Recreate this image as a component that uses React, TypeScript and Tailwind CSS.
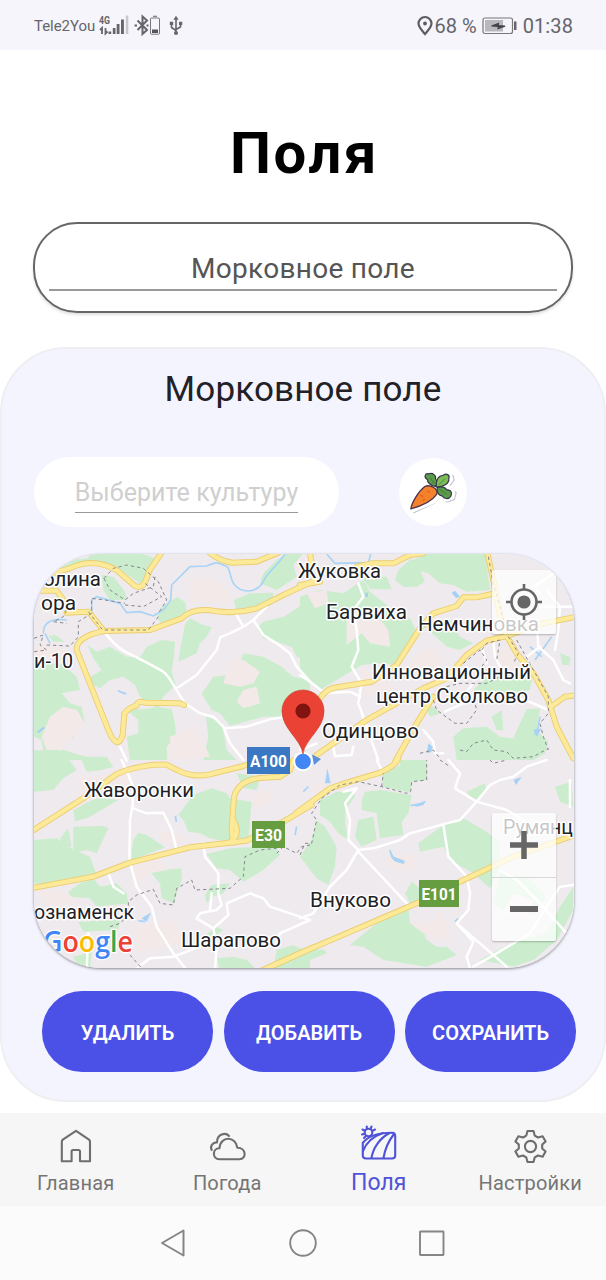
import React from "react";

/* Each quadrant of the map is described in its own local grid, three units per pixel. */
type Quadrant = {
  origin: string;
  greens: string[];
  patches: string[];
  water: string[];
  ponds: string[];
  minor: string[];
  major: string[];
  borders: string[];
};

const quadrants: Quadrant[] = [
  {
    origin: "translate(30 550) scale(0.33333)",
    greens: [
      "50,75 80,45 130,28 170,26 185,10 300,10 340,12 375,25 350,85 330,100 262,55 225,52 190,45 110,60",
      "215,75 250,80 285,125 290,150 240,150 220,120",
      "690,100 700,70 740,30 770,10 820,10 790,45 800,80 740,120",
      "380,205 395,170 440,142 465,155 470,180 455,200 400,226",
      "612,150 660,130 730,128 725,165 700,175 620,185",
      "700,215 760,200 840,150 840,330 800,320 785,290 740,275 700,265 680,235",
      "465,222 480,205 520,225 545,232 530,260 510,280 500,310 445,335 452,290",
      "172,285 200,305 240,290 290,320 330,322 350,290 395,270 435,275 432,320 425,365 437,405 400,440 385,475 350,455 330,440 315,405 280,380 240,390 210,415 180,400 175,385 215,360 190,325",
      "12,330 100,345 140,380 150,420 95,430 120,460 155,470 165,520 135,530 130,565 95,575 90,600 70,620 40,610 35,570 12,560",
      "55,258 75,255 105,275 70,275",
      "290,480 340,478 385,470 425,478 435,520 438,560 410,590 412,630 300,630 290,560 325,550 325,510",
      "515,432 550,380 600,375 625,350 640,310 700,320 755,350 790,380 840,390 840,420 770,450 750,500 700,500 600,528 570,490 545,480",
      "528,500 575,515 590,600 620,630 520,630 535,560",
      "12,600 80,605 100,600 200,630 12,630",
    ],
    patches: [
      "60,500 100,470 140,480 165,520 130,560 90,600 50,600 35,560",
      "580,400 600,330 640,330 690,365 670,400 630,410",
      "640,420 680,410 690,460 640,475 620,455",
      "480,90 520,80 600,120 600,160 480,155",
      "12,290 90,290 130,330 12,320",
      "420,560 500,530 540,620 420,630",
    ],
    water: [
      "M765,12 C740,50 720,60 705,85 C690,120 660,130 630,118 C600,105 605,70 592,50 C560,35 560,35 530,48 L480,50 L425,105 L422,150 L400,180 L370,198 L330,185 L290,188 L270,160 L200,140 L185,150 L185,190",
      "M40,250 C40,215 65,205 110,210 M45,250 L60,280",
    ],
    ponds: ["20,545 40,530 45,535 25,550", "265,420 290,430 285,434 262,424"],
    minor: [
      "M222,243 C240,270 260,290 285,305 L345,335 L400,365 C420,380 425,400 465,460 L510,490 L550,500 L580,530 L600,580 L640,630",
      "M440,415 L500,375 L560,300 L570,262 L600,250 L640,230 L670,210 L710,170 M640,230 L620,195 M670,210 L700,255 L740,280 L780,310 L800,350 L840,395",
      "M585,535 L650,530 L720,508 L760,502",
      "M270,590 L290,632",
    ],
    major: [
      "M50,75 L120,55 Q190,20 262,62 L315,108 Q338,118 348,90 L358,62 L400,0",
      "M535,5 Q570,35 610,38 L680,35 L745,8",
      "M850,93 L760,135 L680,175 Q620,192 560,184 Q490,170 455,205 L360,240 L222,243 Q138,260 140,300 L235,540 Q262,605 278,555 L283,490 Q300,470 320,467 Q322,450 345,458 L450,460 L462,465",
      "M30,122 L80,122 L100,150",
      "M110,188 L175,185 L222,243",
    ],
    borders: [
      "M222,85 L250,55 L290,45 L340,55 L385,95 L410,150 L385,190 M222,85 L240,120 L285,150 L310,130 L370,110 L375,80 M285,165 L340,170 L395,140 L345,100",
      "M50,285 L120,288 L145,260 L145,215 L185,190 L185,145 L225,150 L285,160",
      "M175,185 L218,240 L355,240 L385,200 M110,180 L100,200 L70,215 L110,220",
      "M12,265 L40,255 L30,285 L50,300 L12,305",
    ],
  },
  {
    origin: "translate(300 550) scale(0.33333)",
    greens: [
      "330,35 375,12 555,10 570,120 500,125 460,105 420,100 385,70 345,60",
      "285,90 295,60 335,25 360,60 375,95 350,110 310,110",
      "185,80 260,80 275,118 210,118",
      "0,140 60,120 130,130 190,90 210,125 260,165 270,200 330,205 350,245 325,300 285,345 250,340 185,345 110,390 60,420 0,370",
      "370,225 450,210 480,260 520,280 480,300 440,290",
      "520,420 560,380 610,375 700,370 690,420 610,430 540,450",
      "460,560 490,535 560,530 600,560 640,565 680,478 720,475 710,540 745,575 735,610 700,630 470,630",
      "780,310 812,322 808,345 788,345",
      "370,460 400,470 420,490 390,500",
      "575,500 605,480 610,540 590,540",
    ],
    patches: [
      "140,200 200,170 230,195 265,240 270,290 210,280 185,250 140,285",
      "190,345 220,385 260,390 290,420 200,440 180,390",
      "350,310 400,290 430,340 380,370 320,360",
      "20,130 80,120 85,160 45,175",
      "590,300 640,290 690,350 600,370",
    ],
    water: [
      "M80,12 L105,40 L205,38 L212,12",
      "M720,500 L715,530 L705,555 M755,260 L705,330 M690,290 L725,320",
    ],
    ponds: [
      "195,128 204,128 204,142 195,140",
      "455,128 465,122 480,140 468,144",
      "385,580 398,590 395,605 380,610",
      "700,540 725,535 710,560",
    ],
    minor: [
      "M175,100 L190,140 L160,180 L170,240 L175,300 L155,350 L185,400 L175,460 L190,500",
      "M0,375 L30,395 L75,430 L150,425 L180,440",
      "M580,275 L585,320 L600,350 M545,290 L560,340",
      "M435,485 L490,460 L540,430 M520,400 L480,450",
      "M620,430 L700,460 L745,480",
      "M710,220 L715,290 L760,330 L790,390 L810,400 M720,290 L680,320 M740,120 L780,170 L775,240 L765,300 M720,170 L820,170",
      "M185,490 L235,630 M100,590 L105,618 L155,615 L160,590 M370,540 L400,575 L405,610 L430,610 M0,600 L50,580",
      "M720,130 L700,110 L760,70",
    ],
    major: [
      "M170,50 L215,40 L280,40 L330,15 L370,10",
      "M30,10 L35,40",
      "M0,105 L60,95",
      "M50,460 Q75,415 110,412 L215,395 L290,345 L360,235 L400,190 L470,168 L490,142 L530,142 L575,132",
      "M50,615 L200,510 L370,415 L440,385 L500,315 L560,272 L620,258 L720,222 L840,198",
      "M562,10 L580,90 L600,200 L620,258 L650,310 L700,370 L745,450 L770,530 L820,625",
      "M285,635 L350,520 L400,440",
      "M760,465 L795,440 L825,436",
    ],
    borders: [
      "M565,20 L580,100 L625,260 L655,310 L640,340 M650,270 L700,360 L745,440 L745,490 L720,520 L730,560 L745,600",
      "M545,300 L560,280 L600,270 L590,330 M490,340 L540,300 L560,330 L545,350",
      "M400,450 L410,480 L465,520 L500,520 L530,480 L520,440 M440,410 L480,400 L560,400 L600,380",
      "M360,610 L400,600 L420,625 M480,600 L500,605 L520,580 L560,570 L580,600 L620,605 L640,625 L700,620 L745,595",
    ],
  },
  {
    origin: "translate(30 760) scale(0.33333)",
    greens: [
      "12,-10 50,-10 110,-10 140,30 100,55 70,90 12,95",
      "150,-10 230,-10 250,20 215,30 170,35",
      "130,150 175,125 270,90 265,120 180,170 135,185",
      "130,200 220,198 235,205 200,280 170,270 130,280",
      "90,235 115,205 125,260 100,260",
      "12,240 80,235 130,270 180,290 200,345 135,365 100,360 60,375 12,370",
      "115,395 150,370 190,355 210,380 260,370 290,400 295,430 200,440 180,415 120,410",
      "305,270 310,240 325,218 350,225 405,262 360,280 305,300",
      "445,165 490,105 545,85 590,100 600,115 665,125 655,240 610,250 540,235 510,220 475,215 460,180",
      "360,335 400,330 455,325 455,360 430,430 395,415 390,370",
      "530,282 600,265 660,262 740,265 750,285 700,330 640,365 600,330 560,325",
      "525,405 545,375 600,370 580,400 550,410 530,430",
      "145,485 270,480 265,510 160,515",
      "560,595 610,590 650,600 680,630 570,630",
      "740,570 790,555 840,580 840,630 730,630",
      "130,590 185,575 180,630 150,630",
      "520,530 560,500 580,510 540,540",
      "620,40 690,50 680,90 640,85",
    ],
    patches: [
      "150,50 300,40 300,90 260,120 200,110 130,150",
      "300,310 380,290 410,330 360,340 320,380",
      "12,390 100,390 150,430 60,440",
      "300,500 440,480 450,550 330,580",
      "660,110 710,90 740,120 680,150",
      "390,210 470,230 440,260 390,240",
    ],
    water: ["M345,475 L360,462 M325,482 L345,485", "M435,170 L440,185 M795,225 L800,200"],
    ponds: ["335,475 362,458 350,485", "434,170 440,165 438,185"],
    minor: [
      "M275,0 L310,80 L308,135 L300,180 L298,300 L320,380 L365,440 L380,500 L430,580 L470,630",
      "M310,145 L350,160 L400,158 L425,210 L440,270",
      "M520,250 L525,290 L565,340 L565,400 L575,435 L560,450 L510,460 L500,475 L550,505 L595,465 L590,430 L660,400 L700,415 L720,440 L840,480 L750,520 L735,560",
      "M550,505 L560,560 L555,630 M320,625 L360,595 L430,590 L510,560",
      "M175,520 L170,630 M235,340 L250,380 L280,400 M545,400 L540,450",
    ],
    major: [
      "M8,212 L160,115 L260,42 Q330,12 410,14 C450,35 480,55 540,43 L640,18 L760,-20",
      "M8,384 L190,350 L300,308 L480,262 L650,242 L760,185 L845,135",
      "M610,248 L605,210 L612,110 Q625,62 690,54 L750,50 L780,30 L790,0 M598,248 Q635,225 610,180",
      "M700,630 L850,562",
    ],
    borders: [
      "M240,500 L270,490 L295,465 L295,425 L320,405 L370,388 L390,430 L430,435 L440,385 L485,360 L495,390 L600,385 L640,350 L645,290 L690,270 L740,265 M740,280 L760,260 L800,280 L815,260 L840,255",
      "M300,585 L340,630",
    ],
  },
  {
    origin: "translate(300 760) scale(0.33333)",
    greens: [
      "245,40 300,15 300,0 380,0 382,60 335,65 330,98 250,80",
      "60,120 110,95 160,95 165,110 135,150 135,190 145,240 115,220 90,185 60,165",
      "185,120 195,95 240,90 335,105 325,160 305,185 310,225 240,235 230,160 185,150",
      "175,180 220,170 230,240 185,260 165,230",
      "0,290 35,240 50,180 75,200 110,260 105,320 85,375 50,355 0,290",
      "355,250 430,195 490,175 560,215 600,250 600,320 570,385 520,340 450,300 430,260 360,275",
      "500,95 555,70 558,92 520,125",
      "765,80 815,65 820,140 780,125",
      "150,555 230,490 300,450 325,440 330,490 365,500 380,540 410,560 440,560 470,585 380,620 250,600 190,560",
      "315,400 335,365 360,385 355,430 330,430",
      "540,600 640,545 740,520 780,440 820,380 820,450 770,540 700,600 640,620",
      "0,565 75,570 80,580 30,600 0,610",
      "600,340 680,350 740,410 700,460 640,470 580,430",
    ],
    patches: [
      "310,280 345,290 350,320 300,330 250,300",
      "330,490 400,480 420,450 460,540 420,540 370,520",
      "40,80 60,70 110,90 50,120",
      "640,400 700,420 680,470 600,470",
    ],
    water: ["M270,270 C275,300 285,305 312,308 M332,138 C350,125 350,145 375,125", "M465,485 L475,475 M10,95 L25,80"],
    ponds: [
      "75,70 82,25 92,70",
      "268,268 282,290 314,302 312,312 284,304",
      "335,135 360,128 378,122 370,135 350,140",
      "640,60 665,50 648,75",
    ],
    minor: [
      "M230,0 L245,30 M130,95 L170,85 L135,130 L150,180 L145,240 L175,270 M0,475 L40,460 L90,380 L140,330 L175,270 L220,265 L300,240 L330,220 L440,190 L480,180 L530,125 L570,75 L600,60 L640,50 L680,20 L740,0",
      "M175,275 L320,430",
      "M430,195 L445,290 L500,350 L510,400 L505,450 L470,490 L520,545 L500,590 L510,625 M470,490 L540,550 L620,620 M445,0 L480,40 L465,85 L530,125 L620,150 L670,180",
      "M520,620 L590,580 L690,520 L740,440 L780,380 L820,375 M600,330 L650,360 L720,430 L800,520",
      "M810,60 L810,140",
    ],
    major: [
      "M-10,157 L90,85 L150,65 L240,38 Q290,15 295,-5",
      "M-110,630 L0,580 L140,520 L350,430 L480,365 L640,290 L825,225",
    ],
    borders: [
      "M0,285 L15,250 L35,250 L50,180 L35,160 L65,115 L120,75 L175,65 L245,80 L320,100 L332,95 L335,65 L380,60 L380,0 M245,80 L250,40",
      "M420,0 L450,20 M570,0 L580,10 L620,0",
    ],
  },
];

function MapLabel({ x, y, w, children, size = 20 }: { x: number; y: number; w: number; children: string; size?: number }) {
  return (
    <text
      x={x}
      y={y}
      textLength={w}
      lengthAdjust="spacingAndGlyphs"
      fontSize={size}
      fill="#202124"
      stroke="#ffffff"
      strokeWidth="3"
      strokeLinejoin="round"
      paintOrder="stroke"
    >
      {children}
    </text>
  );
}

function Shield({ x, y, w, h, tw, color, children }: { x: number; y: number; w: number; h: number; tw: number; color: string; children: string }) {
  return (
    <g>
      <rect x={x} y={y} width={w} height={h} fill={color} />
      <text x={x + (w - tw) / 2} y={y + h / 2 + 6} textLength={tw} lengthAdjust="spacingAndGlyphs" fontSize="16.5" fontWeight="700" fill="#fff">
        {children}
      </text>
    </g>
  );
}

function FieldMap() {
  const layer = (draw: (q: Quadrant) => React.ReactNode) =>
    quadrants.map((q, i) => (
      <g key={i} transform={q.origin}>
        {draw(q)}
      </g>
    ));
  return (
    <svg viewBox="34 554 540 414" className="block h-[414px] w-[540px] font-['Roboto',sans-serif]">
      <rect x="34" y="554" width="540" height="414" fill="#efeaee" />
      {layer((q) => q.greens.map((p, i) => <polygon key={i} points={p} fill="#cbedcd" />))}
      {layer((q) => q.patches.map((p, i) => <polygon key={i} points={p} fill="#f3e9e9" />))}
      {layer((q) => (
        <>
          {q.ponds.map((p, i) => <polygon key={i} points={p} fill="#a5d1f5" />)}
          {q.water.map((d, i) => <path key={i} d={d} fill="none" stroke="#a9d4f5" strokeWidth="5" strokeLinejoin="round" />)}
          {q.minor.map((d, i) => <path key={i} d={d} fill="none" stroke="#fff" strokeWidth="7.5" strokeLinejoin="round" strokeLinecap="round" />)}
        </>
      ))}
      {layer((q) => q.major.map((d, i) => <path key={i} d={d} fill="none" stroke="#ebcd72" strokeWidth="18" strokeLinejoin="round" strokeLinecap="round" />))}
      {layer((q) => q.major.map((d, i) => <path key={i} d={d} fill="none" stroke="#fdea98" strokeWidth="12.5" strokeLinejoin="round" strokeLinecap="round" />))}
      {layer((q) => q.borders.map((d, i) => <path key={i} d={d} fill="none" stroke="#86868e" strokeWidth="3" strokeDasharray="10 9" />))}

      <MapLabel x={43} y={586} w={58}>олина</MapLabel>
      <MapLabel x={41} y={610} w={35}>ора</MapLabel>
      <MapLabel x={34} y={668} w={39}>и-10</MapLabel>
      <MapLabel x={298} y={578} w={83}>Жуковка</MapLabel>
      <MapLabel x={326} y={619} w={81}>Барвиха</MapLabel>
      <MapLabel x={418} y={631} w={121}>Немчиновка</MapLabel>
      <MapLabel x={372} y={679} w={159}>Инновационный</MapLabel>
      <MapLabel x={376} y={703} w={152}>центр Сколково</MapLabel>
      <MapLabel x={322} y={738} w={97}>Одинцово</MapLabel>
      <MapLabel x={84} y={797} w={110}>Жаворонки</MapLabel>
      <MapLabel x={310} y={907} w={81}>Внуково</MapLabel>
      <MapLabel x={181} y={947} w={100}>Шарапово</MapLabel>
      <MapLabel x={34} y={919} w={100}>ознаменск</MapLabel>
      <MapLabel x={503} y={834} w={70}>Румянц</MapLabel>

      <Shield x={247} y={747} w={43} h={27} tw={37} color="#3b78c3">A100</Shield>
      <Shield x={252} y={821} w={33} h={27} tw={27} color="#669d41">E30</Shield>
      <Shield x={419} y={880} w={40} h={27} tw={35} color="#669d41">E101</Shield>

      {/* current position and its heading */}
      <path d="M312 754.500 L321 759 L314 765 Z" fill="#5c8fdc" />
      <circle cx="303" cy="761.5" r="9.8" fill="#fff" />
      <circle cx="303" cy="761.5" r="7.8" fill="#4285f4" />
      <path d="M303 754 C301 739 282 729 282 711 A21 21 0 0 1 324 711 C324 729 305 739 303 754 Z" fill="#ea4335" stroke="#c5352c" strokeWidth="0.6" />
      <circle cx="303" cy="711" r="7.6" fill="#811411" />

      <text x="43" y="951.500" fontSize="28" fontFamily="'Open Sans', Roboto, sans-serif" fontWeight="600" textLength="90" lengthAdjust="spacingAndGlyphs" stroke="#fff" strokeWidth="2.5" paintOrder="stroke">
        <tspan fill="#4285f4">G</tspan>
        <tspan fill="#ea4335">o</tspan>
        <tspan fill="#fbbc05">o</tspan>
        <tspan fill="#4285f4">g</tspan>
        <tspan fill="#34a853">l</tspan>
        <tspan fill="#ea4335">e</tspan>
      </text>
    </svg>
  );
}

function StatusBar() {
  return (
    <header className="flex h-[50px] shrink-0 items-center bg-[#f5f5fb] pl-[34px] pr-[33px] pt-[2px] text-[#66666a]">
      <span className="text-[15px] tracking-[-0.05px]">Tele2You</span>
      <svg viewBox="98 14 90 24" className="ml-[3px] h-6 w-[90px]">
        <text x="99" y="23.500" fontSize="10.5" fontWeight="700" fill="#66666a" textLength="11" lengthAdjust="spacingAndGlyphs">4G</text>
        <path d="M102 34v-6l-2 2M105.500 28v5.500l2-2" fill="none" stroke="#66666a" strokeWidth="1.800" />
        <path d="M108.500 31.500h2.700v2.500h-2.700zM112.800 28h2.700v6h-2.700zM116.700 24h2.800V34h-2.800zM121 19.500h2.900V34H121z" fill="#66666a" />
        <path d="M125.800 15.500h2.500v18.500h-2.500z" fill="#c7c7cc" />
        <path d="M137.500 20.500l9.500 9.500-4.500 4V16.500l4.500 4-9.500 9.500" fill="none" stroke="#66666a" strokeWidth="2" />
        <path d="M134.500 25.500h2.500M146.500 25.500h2" stroke="#66666a" strokeWidth="2" />
        <rect x="150.500" y="18" width="9" height="16.200" rx="0.800" fill="none" stroke="#77777b" strokeWidth="1" />
        <path d="M153 16.300h4" stroke="#77777b" strokeWidth="1.200" />
        <path d="M152 29.500h6v3.500h-6z" fill="#55555a" />
        <path d="M176 18v16M171.500 24v3.500l4.500 3M180.500 23.500v3.500l-4.500 2.500" fill="none" stroke="#66666a" strokeWidth="1.600" />
        <path d="M176 15.800l2.600 4h-5.200zM169.800 21.800h3.400v3.300h-3.400zM179 21.800h3.300v3.300H179z" fill="#66666a" />
        <circle cx="176" cy="33" r="2" fill="#66666a" />
      </svg>
      <div className="flex-1" />
      <svg viewBox="0 0 18 22" className="mr-[1px] h-[22px] w-[18px]">
        <path d="M9 19C6 15.500 2.500 12 2.500 8.500a6.500 6.500 0 0 1 13 0C15.500 12 12 15.500 9 19z" fill="none" stroke="#5d5d61" strokeWidth="2.200" />
        <circle cx="9" cy="8.500" r="1.900" fill="#5d5d61" />
      </svg>
      <span className="text-[20px]">68 %</span>
      <svg viewBox="0 0 36 18" className="mx-[5px] h-[18px] w-9">
        <rect x="1" y="1" width="29.500" height="15.500" rx="2" fill="none" stroke="#77777b" strokeWidth="1.200" />
        <rect x="3" y="3" width="18" height="11.500" fill="#b9b9bd" />
        <path d="M9.500 9l7-2.500-.2 2 6.700.600-7 2.600.3-2.200z" fill="#44444a" stroke="#44444a" strokeWidth="1.200" />
        <path d="M32 4.500h2.500v8.500H32z" fill="#66666a" />
      </svg>
      <span className="text-[20px] tracking-[0.1px]">01:38</span>
    </header>
  );
}

function Carrot() {
  return (
    <svg viewBox="-1.5 2.5 90 80" className="h-20 w-[90px]">
      <g transform="scale(0.33333)" strokeLinejoin="round">
        <path d="M72 190 L136 160 L150 142 L172 157 L194 150 L200 130 L178 112 L194 92 L190 76" fill="none" stroke="#c6c7cd" strokeWidth="4" />
        <path d="M68 182 L134 155 L148 137 L170 150 L188 143 L190 124 L170 108 L184 90 L180 76 L150 76 L112 72" fill="none" stroke="#fff" strokeWidth="13" />
        <path d="M64 178 C66 162 84 128 106 111 C120 104 147 116 142 134 C128 155 94 170 64 178Z" fill="#f5822a" stroke="#51354f" strokeWidth="4" />
        <path d="M92 136l9 6M106 148l-6 6M112 124l9 5" stroke="#dd6520" strokeWidth="4" />
        <path d="M138 111 C124 109 112 98 114 90 C102 84 106 70 118 73 C130 68 141 79 138 88 C146 97 143 106 138 111Z" fill="#5a9a48" stroke="#34354f" strokeWidth="3.5" />
        <path d="M140 112 C138 92 148 77 161 78 C170 70 182 76 178 87 C180 102 160 114 140 112Z" fill="#7dbb57" stroke="#34354f" strokeWidth="3.500" />
        <path d="M143 114 C156 109 168 114 172 121 C187 120 188 134 184 140 C178 151 162 148 159 140 C146 138 142 126 143 114Z" fill="#5a9a48" stroke="#34354f" strokeWidth="3.500" />
        <path d="M148 106l18-18M122 84l13 20M148 118l24 16" stroke="#3a6d3e" strokeWidth="2" />
      </g>
    </svg>
  );
}

const iconStroke = { fill: "none", strokeWidth: 2.1, strokeLinejoin: "round" as const, strokeLinecap: "round" as const };

const tabs = [
  {
    label: "Главная",
    active: false,
    icon: (
      <svg viewBox="57 1126 38 38" className="h-[38px] w-[38px]">
        <path d="M76 1130.800 L62.800 1139.600 Q61.800 1140.400 61.800 1142 V1161.300 H71.600 V1151.500 Q71.600 1150 73 1150 H78.600 Q80 1150 80 1151.500 V1161.300 H90 V1142 Q90 1140.400 89 1139.600 Z" stroke="#6e6e6e" {...iconStroke} />
      </svg>
    ),
  },
  {
    label: "Погода",
    active: false,
    icon: (
      <svg viewBox="208 1126 38 38" className="h-[38px] w-[38px]">
        <path d="M219.500 1159.300 C212 1159.300 212 1148.300 219.500 1148.300 C220 1135.500 236 1136 237.300 1147.700 C246.500 1147.500 246.800 1159.300 239.500 1159.300 Z" stroke="#6e6e6e" {...iconStroke} />
        <path d="M211.700 1150 C209.500 1146 213 1142 217 1142.400 C217 1134 225.500 1132 229 1136" stroke="#6e6e6e" {...iconStroke} />
      </svg>
    ),
  },
  {
    label: "Поля",
    active: true,
    icon: (
      <svg viewBox="359 1124 40 38" className="h-[38px] w-10">
        <g stroke="#5053d8" {...iconStroke}>
          <circle cx="368.500" cy="1132.500" r="3.800" />
          <path d="M366.800 1126.500v2M371.500 1126.500l-.8 2M362.500 1129.500l2 1M375 1129.500l-2 1M362 1134.500l2-.5M364 1138l1.500-1.500" />
          <path d="M362.800 1143 C368 1136 378 1132.800 392 1132.800 Q395.200 1132.800 395.200 1136 V1155.500 Q395.200 1158.500 392 1158.500 H366 Q362.800 1158.500 362.800 1155.500 Z" />
          <path d="M363 1151 C366.500 1142 374 1136 383 1133M371.500 1158 C373 1148 380 1138 389.500 1133M383.500 1158 C385 1149 388.500 1141 394 1134" />
        </g>
      </svg>
    ),
  },
  {
    label: "Настройки",
    active: false,
    icon: (
      <svg viewBox="511 1126 38 38" className="h-[38px] w-[38px]">
        <path d="M527.500 1131 h6 l1.200 4.600 l3.300 1.900 l4.600 -1.300 l3 5.200 l-3.400 3.200 v3.800 l3.400 3.200 l-3 5.200 l-4.600 -1.300 l-3.300 1.900 l-1.200 4.600 h-6 l-1.200 -4.600 l-3.300 -1.900 l-4.600 1.300 l-3 -5.200 l3.400 -3.200 v-3.800 l-3.400 -3.200 l3 -5.200 l4.600 1.300 l3.300 -1.900 Z" stroke="#6e6e6e" {...iconStroke} />
        <circle cx="530.500" cy="1146.500" r="5.600" stroke="#6e6e6e" {...iconStroke} />
      </svg>
    ),
  },
];

export default function App() {
  return (
    <div className="flex h-[1280px] w-[606px] flex-col overflow-hidden bg-white font-['Roboto',sans-serif]">
      <StatusBar />

      <h1 className="mt-[69px] h-[68px] shrink-0 pl-[3px] text-center text-[58px] font-bold leading-[68px] tracking-[2.6px] text-black">Поля</h1>

      <div className="mx-[33px] mt-[35px] flex h-[91px] shrink-0 flex-col rounded-[44px] border-2 border-[#666] px-[14px] pt-[22px] shadow-[0_2px_3px_rgba(0,0,0,0.12)]">
        <div className="h-[45px] border-b-2 border-[#999] pt-[6px] text-center text-[28px] leading-[34px] tracking-[0.3px] text-[#555]">Морковное поле</div>
      </div>

      <section className="mt-[34px] flex h-[755px] shrink-0 flex-col rounded-[66px] border-2 border-[#eeeef3] bg-[#f4f4fe]">
        <h2 className="mt-[21px] text-center text-[35px] leading-[40px] tracking-[0.15px] text-[#212127]">Морковное поле</h2>

        <div className="mt-[47px] flex h-[70px] items-center pl-8">
          <div className="flex h-[70px] w-[305px] justify-center rounded-[35px] bg-white pt-[18px]">
            <div className="h-[38px] border-b border-[#999] text-center text-[25px] leading-[36px] tracking-[0.05px] text-[#cfcfcf]">Выберите культуру</div>
          </div>
          <div className="ml-[60px] flex h-[68px] w-[68px] items-center justify-center overflow-hidden rounded-full bg-white">
            <div className="shrink-0">
              <Carrot />
            </div>
          </div>
        </div>

        <div className="relative ml-8 mt-[27px] h-[414px] w-[540px] shrink-0 overflow-hidden rounded-[68px] shadow-[0_1px_3px_rgba(0,0,0,0.45)]">
          <FieldMap />
          <button aria-label="Моё местоположение" className="absolute right-[18px] top-[16px] flex h-16 w-16 items-center justify-center rounded-[2px] bg-white/75 shadow-[0_1px_2px_rgba(0,0,0,0.25)]">
            <svg viewBox="0 0 36 36" className="h-9 w-9">
              <circle cx="18" cy="18" r="12.500" fill="none" stroke="#666" strokeWidth="2.600" />
              <circle cx="18" cy="18" r="6.600" fill="#666" />
              <path d="M18 0v6M18 30v6M0 18h6M30 18h6" stroke="#666" strokeWidth="2.600" />
            </svg>
          </button>
          <div className="absolute bottom-[27px] right-[18px] flex h-[128px] w-16 flex-col rounded-[2px] bg-white/75 shadow-[0_1px_2px_rgba(0,0,0,0.25)]">
            <button aria-label="Приблизить" className="flex flex-1 items-center justify-center border-b border-[#d8d8d8]">
              <svg viewBox="0 0 28 28" className="h-7 w-7">
                <path d="M14 0v28M0 14h28" stroke="#666" strokeWidth="5.500" />
              </svg>
            </button>
            <button aria-label="Отдалить" className="flex flex-1 items-center justify-center">
              <svg viewBox="0 0 28 28" className="h-7 w-7">
                <path d="M0 14h28" stroke="#666" strokeWidth="6" />
              </svg>
            </button>
          </div>
        </div>

        <div className="ml-10 mt-[23px] flex gap-[10.5px]">
          {["УДАЛИТЬ", "ДОБАВИТЬ", "СОХРАНИТЬ"].map((label) => (
            <button key={label} className="h-[81px] w-[171px] rounded-[40px] bg-[#4b51e7] pt-[2px] text-[20px] font-semibold text-white">
              {label}
            </button>
          ))}
        </div>
      </section>

      <nav className="mt-[11px] flex h-[93px] shrink-0 bg-[#f6f6f6]">
        {tabs.map((tab) => (
          <div key={tab.label} className={tab.active ? "flex w-1/4 flex-col items-center pt-[11px] text-[#5053d8]" : "flex w-1/4 flex-col items-center pt-[13px] text-[#757575]"}>
            {tab.icon}
            <span className={tab.active ? "mt-1.5 text-[23px] leading-[30px] tracking-[0.1px]" : "mt-1 text-[20px] leading-[30px] tracking-[0.2px]"}>{tab.label}</span>
          </div>
        ))}
      </nav>

      <footer className="flex h-[74px] shrink-0 items-center justify-center gap-[101px] bg-[#fbfbfb]">
        <svg viewBox="0 0 28 30" className="h-[30px] w-7">
          <path d="M23.500 2.500 V27.500 L2 15 Z" fill="none" stroke="#858585" strokeWidth="2" strokeLinejoin="round" />
        </svg>
        <svg viewBox="0 0 28 30" className="h-[30px] w-7">
          <circle cx="14" cy="15" r="12.800" fill="none" stroke="#858585" strokeWidth="1.900" />
        </svg>
        <svg viewBox="0 0 28 30" className="h-[30px] w-7">
          <rect x="2" y="3.500" width="23.500" height="23.500" rx="0.500" fill="none" stroke="#858585" strokeWidth="1.900" />
        </svg>
      </footer>
    </div>
  );
}
